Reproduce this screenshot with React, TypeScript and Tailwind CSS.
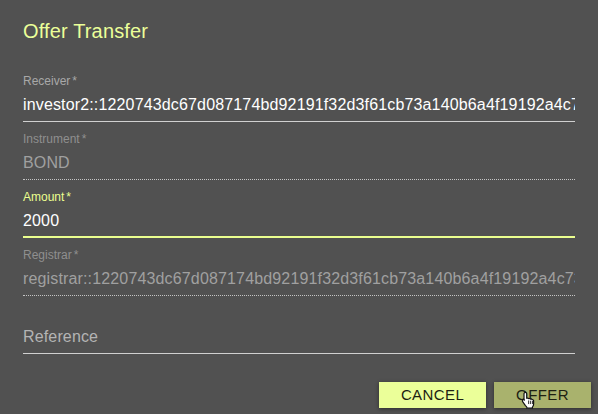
const RECEIVER = 'investor2::1220743dc67d087174bd92191f32d3f61cb73a140b6a4f19192a4c7a1d2e3f4b5c6d7e8f90a1b2c3d4e5f60718293a4b5c6d';
const REGISTRAR = 'registrar::1220743dc67d087174bd92191f32d3f61cb73a140b6a4f19192a4c73a1d2e3f4b5c6d7e8f90a1b2c3d4e5f60718293a4b5c6d';

type FieldProps = {
  label: string;
  value?: string;
  placeholder?: string;
  required?: boolean;
  disabled?: boolean;
  focused?: boolean;
};

function Field({ label, value, placeholder, required, disabled, focused }: FieldProps) {
  const labelColor = focused ? 'text-[#ebff8f]' : disabled ? 'text-[#8f8f8f]' : 'text-[#a8a8a8]';
  const inputColor = disabled ? 'text-[#a0a0a0]' : 'text-white';
  const border = focused
    ? 'border-b-2 border-[#ebff8f]'
    : disabled
      ? 'border-b border-dotted border-[#c4c4c4]'
      : 'border-b border-[#d0d0d0]';

  return (
    <div className="flex flex-col h-[58px]">
      <div className={`h-[16px] pt-[2px] text-[12px] leading-[14px] ${labelColor}`}>
        {label && (
          <span>
            {label}
            {required && <span className="ml-[2px]">*</span>}
          </span>
        )}
      </div>
      <div className={`mt-[3px] h-[31px] ${border}`}>
        <input
          readOnly
          value={value ?? ''}
          placeholder={placeholder}
          className={`w-full h-[27px] bg-transparent outline-none text-[16px] tracking-[0.15px] placeholder:text-[#b4b4b4] placeholder:opacity-100 ${inputColor}`}
        />
      </div>
    </div>
  );
}

function HandCursor() {
  return (
    <svg viewBox="0 0 16 20" className="absolute left-[27px] top-[9px] w-[15px] h-[18px]">
      <path
        d="M4.5 1.6c.9 0 1.5.6 1.5 1.5v5l.7-.2c.7-.1 1.3.1 1.6.6.7-.3 1.5-.1 1.9.5.7-.3 1.5 0 1.9.6.8-.2 1.6.4 1.6 1.3v3.2c0 1.2-.3 2.2-.9 3.1l-.5.9v1H6.2v-1c-.4-.7-1-1.2-1.6-1.9L1.5 11.9c-.5-.6-.5-1.4 0-1.9.6-.5 1.4-.4 2 .1l-.5-.7V3.1c0-.9.6-1.5 1.5-1.5z"
        fill="#fff"
        stroke="#111"
        strokeWidth="1.3"
        strokeLinejoin="round"
      />
      <path d="M8.2 10.5v4M10.4 10.8v3.7M12.6 11v3.5" stroke="#111" strokeWidth="1" fill="none" />
    </svg>
  );
}

export default function App() {
  return (
    <div className="w-[598px] h-[414px] overflow-hidden bg-[#515151] font-['Liberation_Sans',Arial,sans-serif]">
      <h2 className="px-[23px] pt-[19px] text-[20px] leading-[25px] font-normal tracking-[0.15px] text-[#ebff99]">Offer Transfer</h2>
      <div className="flex flex-col mt-[28px] ml-[23px] w-[552px]">
        <Field label="Receiver" required value={RECEIVER} />
        <Field label="Instrument" required disabled value="BOND" />
        <Field label="Amount" required focused value="2000" />
        <Field label="Registrar" required disabled value={REGISTRAR} />
        <Field label="" placeholder="Reference" />
      </div>
      <div className="flex justify-end gap-[8px] mt-[20px] pr-[7px]">
        <button className="w-[107px] h-[26px] bg-[#ebff99] text-[#1d1f12] text-[15px] uppercase tracking-[0.4px] shadow-[0_1px_4px_rgba(0,0,0,0.45)]">
          Cancel
        </button>
        <button className="relative w-[97px] h-[26px] bg-[#a9b26d] text-[#1d1f12] text-[15px] uppercase tracking-[0.4px] shadow-[0_1px_4px_rgba(0,0,0,0.45)]">
          Offer
          <HandCursor />
        </button>
      </div>
    </div>
  );
}
